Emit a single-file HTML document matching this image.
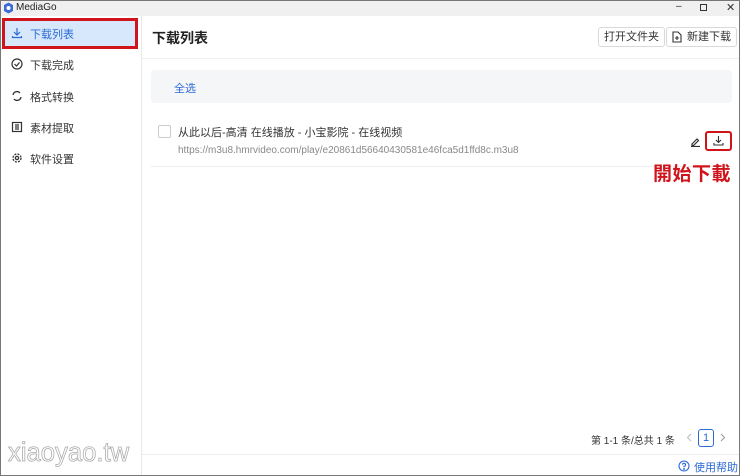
<!DOCTYPE html>
<html><head><meta charset="utf-8"><style>
*{margin:0;padding:0;box-sizing:border-box}
body{width:740px;height:476px;overflow:hidden;background:#fff;font-family:"Liberation Sans","Noto Sans CJK SC",sans-serif;font-size:11px;color:#333;position:relative}
.a{position:absolute}
.win{left:0;top:0;width:740px;height:476px;border:1px solid #777}
.tb{left:1px;top:1px;width:738px;height:15px;background:#f0f0f0}
.side{left:1px;top:16px;width:141px;height:459px;border-right:1px solid #e8e8e8}
.it{left:12px;font-size:11px;color:#333}
.btn{top:27px;height:20px;border:1px solid #d9d9d9;border-radius:3px;font-size:11px;line-height:18px;padding:0 5px;background:#fff}
</style></head><body>
<div class="a tb"></div>
<svg class="a" style="left:3px;top:2px" width="11" height="12" viewBox="0 0 11 12"><path d="M5.5 0.5 L10 3 V9 L5.5 11.5 L1 9 V3Z" fill="#3d6bd8"/><circle cx="5.5" cy="6" r="2" fill="#fff"/></svg>
<div class="a" style="left:16px;top:2px;font-size:10px;color:#222">MediaGo</div>
<div class="a" style="left:676px;top:1px;font-size:10px">–</div>
<div class="a" style="left:700px;top:4px;width:7px;height:7px;border:1px solid #333"></div>
<div class="a" style="left:726px;top:1px;font-size:11px">✕</div>
<div class="a side"></div>
<div class="a" style="left:4px;top:19px;width:132px;height:29px;background:#d7e8fc"></div>
<div class="a" style="left:2px;top:18px;width:136px;height:31px;border:3px solid #d0141c"></div>
<svg class="a" style="left:11px;top:27px" width="12" height="12" viewBox="0 0 12 12" fill="none" stroke="#2c6ad6" stroke-width="1.2"><path d="M6 1v7M3 5l3 3 3-3M1.5 9v1.5h9V9"/></svg>
<div class="a" style="left:30px;top:26px;color:#2c6ad6;font-size:11px">下载列表</div>
<svg class="a" style="left:11px;top:58px" width="12" height="12" viewBox="0 0 12 12" fill="none" stroke="#333" stroke-width="1.2"><circle cx="6" cy="6" r="5"/><path d="M3.5 6l2 2 3-3.5"/></svg>
<div class="a it" style="left:30px;top:57px">下载完成</div>
<svg class="a" style="left:11px;top:90px" width="12" height="12" viewBox="0 0 12 12" fill="none" stroke="#333" stroke-width="1.3"><path d="M2 5a4 4 0 0 1 7-2M10 7a4 4 0 0 1-7 2"/></svg>
<div class="a it" style="left:30px;top:89px">格式转换</div>
<svg class="a" style="left:11px;top:121px" width="12" height="12" viewBox="0 0 12 12" fill="none" stroke="#333" stroke-width="1.2"><rect x="1.5" y="1.5" width="9" height="9"/><path d="M4 4h4M4 6h4M4 8h4"/></svg>
<div class="a it" style="left:30px;top:120px">素材提取</div>
<svg class="a" style="left:11px;top:152px" width="12" height="12" viewBox="0 0 12 12" fill="none" stroke="#333" stroke-width="1.3"><circle cx="6" cy="6" r="4" stroke-dasharray="2 1.2"/><circle cx="6" cy="6" r="1.6"/></svg>
<div class="a it" style="left:30px;top:151px">软件设置</div>
<div class="a" style="left:8px;top:437px;font-size:27px;color:#fff;-webkit-text-stroke:0.8px #aaa;font-family:'Liberation Sans',sans-serif;transform:scaleX(0.95);transform-origin:left">xiaoyao.tw</div>

<div class="a" style="left:152px;top:28px;font-size:14px;font-weight:bold;color:#222">下载列表</div>
<div class="a btn" style="left:598px">打开文件夹</div>
<div class="a btn" style="left:666px;padding-left:20px">新建下载</div>
<svg class="a" style="left:672px;top:31px" width="10" height="12" viewBox="0 0 10 12" fill="none" stroke="#333" stroke-width="1.1"><path d="M1 1h5l3 3v7H1z"/><path d="M5 5v4M3 7h4"/></svg>
<div class="a" style="left:142px;top:58px;width:597px;height:1px;background:#f0f0f0"></div>
<div class="a" style="left:151px;top:70px;width:581px;height:33px;background:#f5f6f7;border-radius:4px"></div>
<div class="a" style="left:174px;top:80px;color:#2c6ad6">全选</div>
<div class="a" style="left:158px;top:125px;width:13px;height:13px;border:1px solid #ccc;border-radius:2px"></div>
<div class="a" style="left:178px;top:124px;font-size:11px;color:#333">从此以后-高清 在线播放 - 小宝影院 - 在线视频</div>
<div class="a" style="left:178px;top:145px;font-size:10px;color:#888">https://m3u8.hmrvideo.com/play/e20861d56640430581e46fca5d1ffd8c.m3u8</div>
<div class="a" style="left:151px;top:166px;width:581px;height:1px;background:#eee"></div>
<svg class="a" style="left:690px;top:136px" width="11" height="11" viewBox="0 0 11 11" fill="none" stroke="#333" stroke-width="1.2"><path d="M2 8l5-5 1.5 1.5-5 5H2zM1 10.5h9"/></svg>
<div class="a" style="left:705px;top:131px;width:27px;height:20px;border:2px solid #d0141c;border-radius:3px"></div>
<svg class="a" style="left:713px;top:135px" width="11" height="11" viewBox="0 0 11 11" fill="none" stroke="#333" stroke-width="1.1"><path d="M5.5 1v6M3 5l2.5 2.5L8 5M1 8v2h9V8"/></svg>
<div class="a" style="left:653px;top:159px;font-size:19px;font-weight:bold;color:#d0141c;letter-spacing:0.5px">開始下載</div>

<div class="a" style="left:591px;top:432px;font-size:10px;color:#333">第 1-1 条/总共 1 条</div>
<svg class="a" style="left:686px;top:433px" width="6" height="9" viewBox="0 0 6 9" fill="none" stroke="#bbb" stroke-width="1"><path d="M5 1L1.5 4.5 5 8"/></svg>
<div class="a" style="left:698px;top:429px;width:16px;height:18px;border:1px solid #2c6ad6;border-radius:3px;color:#2c6ad6;text-align:center;line-height:16px;font-size:11px">1</div>
<svg class="a" style="left:720px;top:433px" width="6" height="9" viewBox="0 0 6 9" fill="none" stroke="#999" stroke-width="1"><path d="M1 1l3.5 3.5L1 8"/></svg>
<div class="a" style="left:142px;top:454px;width:597px;height:1px;background:#eee"></div>
<svg class="a" style="left:678px;top:460px" width="12" height="12" viewBox="0 0 12 12" fill="none" stroke="#2c6ad6" stroke-width="1.1"><circle cx="6" cy="6" r="5"/><path d="M4.5 4.7a1.5 1.5 0 1 1 1.5 1.6v1"/><circle cx="6" cy="9" r=".4" fill="#2c6ad6"/></svg>
<div class="a" style="left:694px;top:459px;color:#2c6ad6;font-size:11px">使用帮助</div>
<div class="a win"></div>
</body></html>
